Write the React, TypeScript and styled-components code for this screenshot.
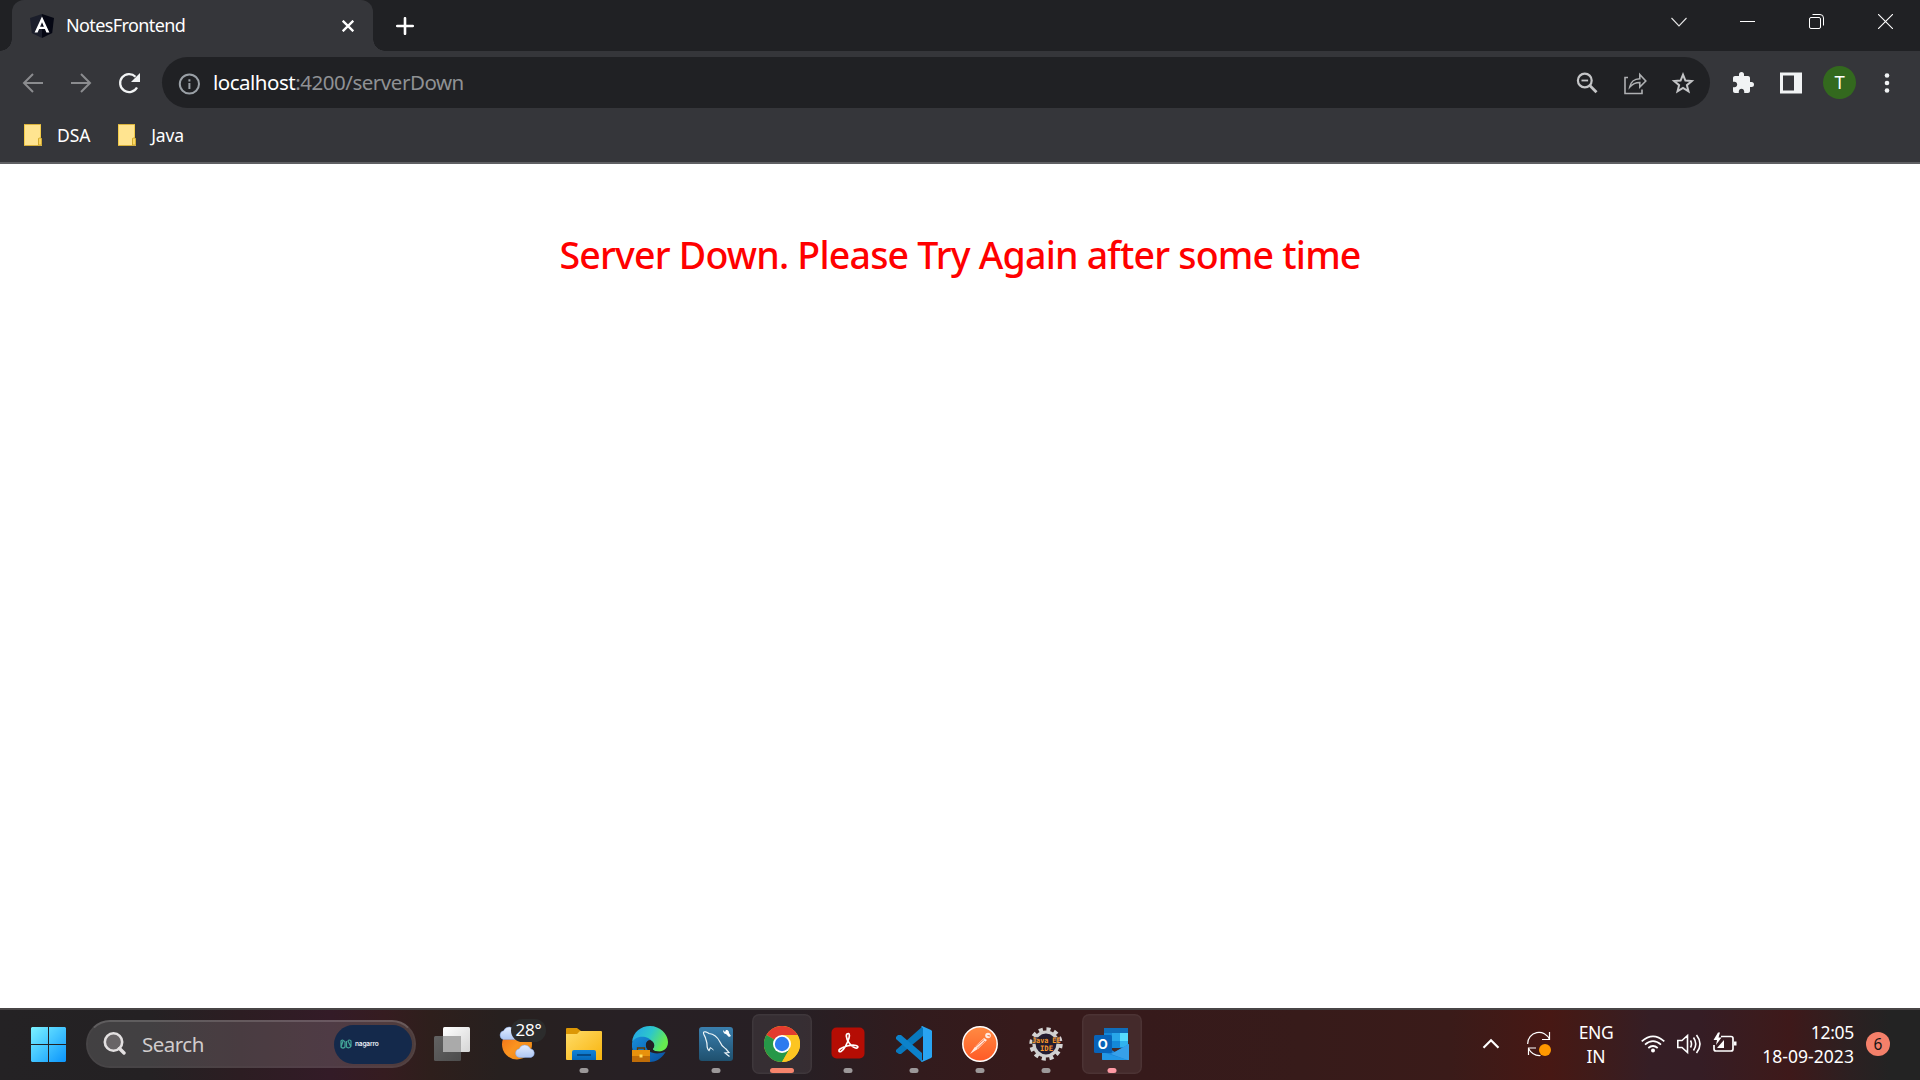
import React from 'react';
import styled, { createGlobalStyle } from 'styled-components';

const Global = createGlobalStyle`
  *{box-sizing:border-box}
  html,body{margin:0;padding:0;background:#fff;overflow:hidden}
  body{font-family:"Noto Sans","Open Sans",sans-serif;color:#fff}
  svg{display:block;flex:none}
`;

const Screen = styled.div`width:1920px;height:1080px;display:flex;flex-direction:column;overflow:hidden;`;
const TabStrip = styled.header`height:51px;flex:none;background:#202124;display:flex;`;
const TabShape = styled.div`
  width:361px;height:51px;margin-left:12px;padding:0 19px 0 18px;display:flex;align-items:center;
  background:#35363a;border-radius:12px 12px 0 0;position:relative;
  &::before,&::after{content:'';position:absolute;bottom:0;width:12px;height:12px;}
  &::before{left:-12px;background:radial-gradient(circle at 0 0,#202124 11.5px,#35363a 12px);}
  &::after{right:-12px;background:radial-gradient(circle at 100% 0,#202124 11.5px,#35363a 12px);}
`;
const Label = styled.span<{ $size: number; $ls?: number; $color?: string; $up?: boolean }>`
  font-size:${p => p.$size}px;letter-spacing:${p => p.$ls ?? 0}px;color:${p => p.$color ?? '#fff'};
  line-height:24px;white-space:pre;
  ${p => p.$up && 'transform:translateY(-1px);'}
`;
const TabTitle = styled(Label)`margin-left:12px;flex:1;`;
const NewTab = styled.div`margin-left:23px;display:flex;align-items:center;`;
const WindowButtons = styled.div`margin-left:auto;display:flex;height:43px;`;
const WindowButton = styled.div<{ $w?: number }>`width:${p => p.$w ?? 69}px;display:flex;align-items:center;justify-content:center;`;
const Toolbar = styled.div`height:63px;flex:none;background:#35363a;display:flex;padding:6px 0;align-items:center;`;
const NavButtons = styled.div`display:flex;gap:24px;padding-left:21px;width:162px;`;
const Omnibox = styled.div`
  width:1548px;height:51px;border-radius:26px;background:#202124;display:flex;align-items:center;padding:0 15px 0 15px;
`;
const Url = styled.div`margin-left:12px;flex:1;display:flex;`;
const OmniActions = styled.div`display:flex;gap:24px;align-items:center;`;
const Actions = styled.div`display:flex;align-items:center;padding-left:21px;`;
const Avatar = styled.div`
  width:33px;height:33px;border-radius:50%;background:#33691e;display:flex;align-items:center;justify-content:center;
  margin:0 19px 0 20px;font-family:Roboto,sans-serif;font-size:18px;
`;
const PanelGap = styled.div`margin-left:24px;`;
const Bookmarks = styled.div`height:48px;flex:none;background:#35363a;display:flex;padding:10px 0 0 24px;gap:28px;`;
const Bookmark = styled.div`display:flex;align-items:flex-start;gap:15px;height:24px;`;
const Page = styled.main`
  height:846px;flex:none;border-top:2px solid #5f6063;background:#fff;display:flex;justify-content:center;align-items:flex-start;padding-top:64px;
`;
const Heading = styled.h1`
  margin:0;font-size:37.5px;line-height:54px;font-weight:500;color:#f00;letter-spacing:-.79px;white-space:nowrap;
`;
const Taskbar = styled.footer`
  height:72px;flex:none;border-top:2px solid #484546;display:flex;align-items:stretch;
  background:linear-gradient(90deg,#242224 0,#242123 150px,#2c1d22 240px,#331b27 330px,#351c20 385px,#2e1f1c 430px,#27201f 500px,#272024 620px,#271f24 800px,#321b1d 920px,#361a1b 1020px,#361a1b 1140px,#371b1a 1300px,#3a1b19 1450px,#471814 1550px,#401b19 1590px,#351e25 1650px,#351d25 1700px,#3b1b1d 1760px,#3e191a 1790px,#2c2021 1850px,#232323 1890px,#232323 1920px);
`;
const Start = styled.div`padding:17px 20px 0 31px;`;
const SearchBox = styled.div`
  width:330px;height:48px;margin-top:10px;border-radius:24px;border:2px solid rgba(255,255,255,.16);border-top-color:rgba(255,255,255,.27);
  background:rgba(255,255,255,.14);background-clip:padding-box;display:flex;align-items:center;padding:0 2px 0 15px;
`;
const SearchLabel = styled(Label)`margin-left:16px;flex:1;`;
const Pill = styled.div`
  width:78px;height:39px;border-radius:20px;background:#14294b;display:flex;align-items:center;padding-left:6px;gap:3px;
  font-family:Inter,sans-serif;font-size:6.6px;font-weight:600;color:#e8ecf4;letter-spacing:-.2px;
`;
const Apps = styled.div`display:flex;gap:6px;margin-left:6px;`;
const AppSlot = styled.div<{ $active?: boolean }>`
  width:60px;height:60px;margin-top:4px;border-radius:7px;position:relative;display:flex;align-items:center;justify-content:center;
  ${p => p.$active && 'background:rgba(255,255,255,.07);box-shadow:inset 0 0 0 1.5px rgba(255,255,255,.045);'}
`;
const Indicator = styled.i<{ $w?: number; $color?: string }>`
  position:absolute;bottom:1px;left:50%;transform:translateX(-50%);width:${p => p.$w ?? 9}px;height:5px;border-radius:3px;background:${p => p.$color ?? '#9c9899'};
`;
const TempBadge = styled.div`
  position:absolute;left:23px;top:5px;width:35px;height:23px;border-radius:12px;background:#2c2c2c;display:flex;align-items:center;justify-content:center;
`;
const Tray = styled.div`margin-left:auto;display:flex;align-items:center;padding:0 30px 2px 0;`;
const TrayItem = styled.div<{ $ml: number }>`margin-left:${p => p.$ml}px;`;
const Stack = styled.div<{ $align: string; $w: number; $ml: number }>`
  width:${p => p.$w}px;margin-left:${p => p.$ml}px;display:flex;flex-direction:column;align-items:${p => p.$align};
`;
const Count = styled.div`
  width:24px;height:24px;border-radius:50%;background:#f4806a;margin-left:12px;display:flex;align-items:center;justify-content:center;
`;

const AngularIcon = () => (
  <svg width="24" height="24" viewBox="0 0 24 24">
    <path d="M12 0 0 4l1.8 15L12 24z" fill="#1b1e2b" /><path d="M12 0l12 4-1.8 15L12 24z" fill="#050713" />
    <path d="M12 2.600 4.600 18.600h3l1.500-3.600h5.800l1.500 3.600h3L12 2.600zm0 5.600 1.900 4.500h-3.800z" fill="#fff" />
  </svg>
);
const Arrow = ({ flip }: { flip?: boolean }) => (
  <svg width="24" height="24" viewBox="0 0 24 24" fill="none" stroke="#8b8c8f" strokeWidth="2">
    {flip ? <path d="M2 12h18M12 3l9 9-9 9" /> : <path d="M22 12H4M12 3l-9 9 9 9" />}
  </svg>
);
const FolderMark = () => (
  <svg width="18" height="22" viewBox="0 0 18 22">
    <path d="M0 0h17v14.5h1V22H0z" fill="#ffe490" />
    <path d="M.5.5h16v14h-2v7H.5z" fill="#ffe490" stroke="#f3cc49" />
    <path d="M14.5 15q0-1 1-1h1q1 0 1 1v6h-3z" fill="#fbd662" stroke="#c79f25" strokeWidth=".8" />
    <path d="M0 .3h17M0 21.6h18" stroke="#c5a033" strokeWidth=".7" />
  </svg>
);
const StarIcon = () => (
  <svg width="24" height="24" viewBox="0 0 24 24" fill="none" stroke="#c4c5c7" strokeWidth="2">
    <path d="M12 3.700l2.400 5.900 6.400.5-4.900 4.100 1.600 6.200L12 17l-5.500 3.400 1.600-6.200-4.900-4.100 6.400-.5z" />
  </svg>
);

const WindowsLogo = () => (
  <svg width="35" height="35" viewBox="0 0 35 35">
    <defs><linearGradient id="win" x1="0" y1="0" x2="35" y2="35" gradientUnits="userSpaceOnUse"><stop stopColor="#7cf2ff" /><stop offset=".5" stopColor="#42c4ff" /><stop offset="1" stopColor="#0a94fc" /></linearGradient></defs>
    <path d="M1 0h16v17H0V1zM18 0h16l1 1v16H18zM0 18h17v17H1l-1-1zM18 18h17v16l-1 1H18z" fill="url(#win)" />
  </svg>
);
const TaskView = () => (
  <svg width="36" height="34" viewBox="0 0 36 34">
    <defs><linearGradient id="tv" x1="0" y1="0" x2="1" y2="1"><stop stopColor="#fff" /><stop offset="1" stopColor="#d5d5d5" /></linearGradient>
      <linearGradient id="tv2" x1="0" y1="0" x2="1" y2="1"><stop stopColor="#626262" /><stop offset="1" stopColor="#4d4d4d" /></linearGradient></defs>
    <rect y="9" width="27" height="25" rx="1.5" fill="url(#tv2)" /><rect x="9" width="27" height="25" rx="1.5" fill="url(#tv)" />
    <path d="M9 9h18v16H10.500q-1.500 0-1.500-1.500z" fill="#aaa" />
  </svg>
);
const Cloud = ({ x, y }: { x: number; y: number }) => (
  <path transform={`translate(${x} ${y})`} d="M4.500 13A4.500 4.500 0 0 1 4.700 4.200 6 6 0 0 1 15.800 4.200 4.500 4.500 0 0 1 16.500 13z" fill="url(#cl)" stroke="#7fa0de" strokeWidth=".5" />
);
const Weather = () => (
  <svg width="38" height="36" viewBox="0 0 38 36">
    <defs><linearGradient id="sun" x1="0" y1="0" x2="1" y2="1"><stop stopColor="#ef6a16" /><stop offset=".5" stopColor="#fb9420" /><stop offset="1" stopColor="#e9860f" /></linearGradient>
      <linearGradient id="cl" x1="0" y1="0" x2="0" y2="1"><stop stopColor="#e3edff" /><stop offset="1" stopColor="#adc6f3" /></linearGradient></defs>
    <circle cx="18" cy="18.500" r="15" fill="url(#sun)" /><Cloud x={0} y={0.500} /><Cloud x={15.500} y={18.500} />
  </svg>
);
const Explorer = () => (
  <svg width="36" height="34" viewBox="0 0 36 34">
    <defs><linearGradient id="fx" x1="0" y1="0" x2="1" y2="1"><stop stopColor="#ffdc68" /><stop offset="1" stopColor="#f8b40d" /></linearGradient><linearGradient id="fb" x1="0" y1="0" x2="0" y2="1"><stop stopColor="#1283d8" /><stop offset="1" stopColor="#0668b8" /></linearGradient></defs>
    <path d="M0 2q0-1 1-1h10l4 3v5H0z" fill="#dc9705" /><path d="M0 7h11l3-3h21q1 0 1 1v28H1q-1 0-1-1z" fill="url(#fx)" />
    <path d="M6 33v-8q0-2 2-2h20q2 0 2 2v8z" fill="url(#fb)" /><path d="M11 28h14" stroke="#053f76" strokeWidth="1.600" />
  </svg>
);
const Edge = () => (
  <svg width="36" height="36" viewBox="0 0 36 36">
    <defs><linearGradient id="e1" x1="0" y1="0" x2="1" y2=".4"><stop stopColor="#22a0ed" /><stop offset=".55" stopColor="#2dc7cb" /><stop offset="1" stopColor="#66eb4f" /></linearGradient><linearGradient id="e2" x1="0" y1="0" x2="1" y2="1"><stop stopColor="#1790dc" /><stop offset="1" stopColor="#0a4fa0" /></linearGradient></defs>
    <path d="M0 17C2 9 11 7 17 11c3 2 4 3.500 4 5-3-4-8-1-7 4 1 6 8 9.500 19.500 6-4 7-10.500 10-15.500 10C6 36-1 28 0 17z" fill="url(#e2)" />
    <path d="M0 16C1 6 9 0 18 0c10 0 18 8 18 16 0 6-4 9.500-9 9.500-4 0-7-1.500-6-3 1.500-2 1-4.500-1-7C17 10 5 8 0 16z" fill="url(#e1)" />
    <path d="M14 19c0-4 4-6 7-3 2 3 1.500 5 0 6.500-1 2 3 3.500 7 3-5 2-14 0-14-6.500z" fill="#221f25" />
    <rect y="24" width="18" height="12" fill="#c06d08" /><path d="M0 24h18v6H0z" fill="#e8920d" /><path d="M5.500 24v-2h7v2" fill="none" stroke="#623800" strokeWidth="1.300" /><rect x="7.500" y="28.500" width="3" height="3" fill="#ffdc5b" />
  </svg>
);
const MySql = () => (
  <svg width="34" height="34" viewBox="0 0 34 34">
    <defs><linearGradient id="my" x1="0" y1="0" x2="0" y2="1"><stop stopColor="#3a7fae" /><stop offset="1" stopColor="#1f506e" /></linearGradient></defs>
    <rect width="34" height="34" rx="3" fill="url(#my)" />
    <path d="M11.500 20.500l-1.500 3c-2-1.500-2-4-2-6 0-2.500-1-4-1.500-6.500C6 9 4 7 4.500 5.500 5 4 8 5 10 6.500c5 .5 9 4.500 11 8.500 1.500 4 3.500 5 6 7l3 3.500-4 .5 4.500 3.500" fill="none" stroke="#edf5f8" strokeWidth="1.200" />
    <path d="M11.500 20.500l3 2.500" stroke="#edf5f8" />
    <path d="M24 3l2 2 1-2c3 0 3 2 3 3l2 3-2 1-3-3c-2 0-3-2-3-4z" fill="#fff" />
  </svg>
);
const Chrome = () => (
  <svg width="36" height="36" viewBox="0 0 36 36">
    <circle cx="18" cy="18" r="18" fill="#fcc521" /><path d="M18 18 2.400 9A18 18 0 0 1 33.600 9z" fill="#e33b2e" />
    <path d="M2.400 9A18 18 0 0 0 18 36l7.800-13.500L18 18z" fill="#269848" /><path d="M18 9h15.600A18 18 0 0 1 18 36l7.800-13.500z" fill="#fcc521" />
    <circle cx="18" cy="18" r="9" fill="#fff" /><circle cx="18" cy="18" r="7.200" fill="#2e7bef" />
  </svg>
);
const Acrobat = () => (
  <svg width="34" height="34" viewBox="0 0 34 34"><rect x=".5" y=".5" width="33" height="31" rx="5" fill="#b50d04" />
    <path d="M16 7c2-1.500 3 .5 2 4-1.500 5-5 12-8 13.500-2 1-3-1-1-2.500 4-3 12-4.500 16-3.500 3 1 2 3-.5 2.500C20 20 15.500 13 15.300 9c0-1 .2-1.600.7-2z" fill="none" stroke="#fff" strokeWidth="1.700" /></svg>
);
const VsCode = () => (
  <svg width="36" height="36" viewBox="0 0 36 36">
    <path d="M27 0 0 24v2l3 2h2L27 10z" fill="#0878bd" /><path d="M5 9 2 9 0 11v2l26 23V27z" fill="#0c82cb" /><path d="M26 0l9 4 1 1v26l-1 1-9 4-1-1 2-1V2l-2-1z" fill="#29a4f1" />
  </svg>
);
const Postman = () => (
  <svg width="36" height="36" viewBox="0 0 36 36">
    <defs><linearGradient id="pm" x1="0" y1="0" x2="0" y2="1"><stop stopColor="#ff8b43" /><stop offset="1" stopColor="#ff5a26" /></linearGradient></defs>
    <circle cx="18" cy="18" r="17.200" fill="url(#pm)" stroke="#fff" strokeWidth="1.500" />
    <path d="M8 28l5.500-8 8.500-8 3 2-8.500 8.500z" fill="#ffe9df" /><path d="M13 21l9-7.500M15 22.500l8-7.500" stroke="#ff6b32" strokeWidth=".8" /><circle cx="26" cy="9.500" r="2.800" fill="#ffe9df" /><path d="M25.500 9.500l2.500.500" stroke="#ff6b32" />
  </svg>
);
const JavaIde = () => (
  <svg width="36" height="36" viewBox="0 0 36 36">
    <circle cx="18" cy="18" r="14.800" fill="none" stroke="#d4d4d4" strokeWidth="3.800" strokeDasharray="4.100 3.650" /><circle cx="18" cy="18" r="12" fill="#221c31" stroke="#cfcfcf" strokeWidth="3.200" />
    <rect x="4" y="11" width="28" height="7" fill="#231c27" opacity=".7" />
    <text x="4" y="17" fontFamily="DejaVu Sans Mono" fontWeight="700" fontSize="7.500" fill="#f8982c" textLength="28.500" lengthAdjust="spacingAndGlyphs">Java EE</text>
    <text x="12" y="24.500" fontFamily="DejaVu Sans Mono" fontWeight="700" fontSize="7.500" fill="#f8982c" textLength="13" lengthAdjust="spacingAndGlyphs">IDE</text>
  </svg>
);
const Outlook = () => (
  <svg width="36" height="34" viewBox="0 0 36 34">
    <path d="M10 1h24v20H10z" fill="#1488d8" /><path d="M10 1h24v5H10z" fill="#0f6dba" /><path d="M18 6h8v8h-8z" fill="#27a6e9" /><path d="M26 6h8v8h-8z" fill="#55dcff" /><path d="M26 14h8v6h-8z" fill="#30b2ef" />
    <path d="M35 17v15q0 1-1 1H9q-1 0-1-1V17l13 8z" fill="#1b83d8" /><path d="M35 17 17 27l16 6h2z" fill="#36a0ea" /><path d="M8 25l26 8H9q-1 0-1-1z" fill="#2297e6" />
    <rect y="8" width="18" height="18" rx="1.500" fill="#0863b9" /><text x="3.700" y="21.500" fontFamily="Inter" fontWeight="700" fontSize="13" fill="#fff">O</text>
  </svg>
);

export default function App() {
  return (
    <Screen>
      <Global />
      <TabStrip>
        <TabShape>
          <AngularIcon />
          <TabTitle $up $size={18} $ls={-.6}>NotesFrontend</TabTitle>
          <svg width="12" height="12" viewBox="0 0 12 12" stroke="#fff" strokeWidth="2.300"><path d="M.7.7l10.600 10.600M11.300.7.7 11.300" /></svg>
        </TabShape>
        <NewTab><svg width="18" height="18" viewBox="0 0 18 18" stroke="#fff" strokeWidth="2.600" strokeLinecap="round"><path d="M9 1.200v15.600M1.200 9h15.600" /></svg></NewTab>
        <WindowButtons>
          <WindowButton $w={68}><svg width="16" height="10" viewBox="0 0 16 10" fill="none" stroke="#e5e5e5" strokeWidth="1.100"><path d="M.5 1 8 9l7.500-8" /></svg></WindowButton>
          <WindowButton><svg width="15" height="2" viewBox="0 0 15 2"><path d="M0 0h15v1H0z" fill="#fff" /></svg></WindowButton>
          <WindowButton><svg width="15" height="15" viewBox="0 0 15 15" fill="none" stroke="#fff"><rect x=".5" y="3.500" width="11" height="11" rx="1.500" /><path d="M3.500.5H11q3.500 0 3.500 3.500v7.500" /></svg></WindowButton>
          <WindowButton><svg width="15" height="15" viewBox="0 0 15 15" stroke="#fff" strokeWidth="1.100"><path d="M0 0l15 15M15 0 0 15" /></svg></WindowButton>
        </WindowButtons>
      </TabStrip>
      <Toolbar>
        <NavButtons>
          <Arrow /><Arrow flip />
          <svg width="24" height="24" viewBox="0 0 24 24"><path d="M20 16.500A9 9 0 1 1 18.500 5.700" fill="none" stroke="#f1f3f4" strokeWidth="2.300" /><path d="M23 2v9h-9z" fill="#f1f3f4" /></svg>
        </NavButtons>
        <Omnibox>
          <svg width="24" height="24" viewBox="0 0 24 24" fill="none" stroke="#9aa0a6" strokeWidth="2"><circle cx="12.400" cy="13" r="9.600" /><path d="M12.400 12v6M12.400 8.200v2.200" /></svg>
          <Url><Label $up $size={20.500} $ls={-.5}>localhost</Label><Label $up $size={20.500} $ls={-.46} $color="#8f9194">:4200/serverDown</Label></Url>
          <OmniActions>
            <svg width="24" height="24" viewBox="0 0 24 24" fill="none" stroke="#c4c5c7" strokeWidth="2.200"><circle cx="9.800" cy="9.500" r="6.900" /><path d="M6.500 9.500h6.600" strokeWidth="1.800" /><path d="M14.800 14.500l6.700 6.700" strokeWidth="2.800" /></svg>
            <svg width="24" height="24" viewBox="0 0 24 24" fill="none" stroke="#aeb0b2" strokeWidth="1.600"><path d="M5 6.500H2v16h17v-4" /><path d="M6.800 16C8 10 11 8 16.800 7.700V3.500l6 6.500-6 6v-4.500c-4.500 0-7 1-10 4.500z" /></svg>
            <StarIcon />
          </OmniActions>
        </Omnibox>
        <Actions>
          <svg width="24" height="24" viewBox="0 0 24 24" fill="#f1f3f4"><path d="M20.500 11H19V7c0-1.100-.9-2-2-2h-4V3.500a2.500 2.500 0 0 0-5 0V5H4c-1.100 0-2 .9-2 2v3.800h1.500c1.500 0 2.700 1.200 2.700 2.700S5 16.200 3.500 16.200H2V20c0 1.100.9 2 2 2h3.800v-1.500c0-1.500 1.200-2.700 2.700-2.700s2.700 1.200 2.700 2.700V22H17c1.100 0 2-.9 2-2v-4h1.500a2.500 2.500 0 0 0 0-5z" /></svg>
          <PanelGap><svg width="24" height="24" viewBox="0 0 24 24"><path fillRule="evenodd" d="M1 1.500h22v21H1zM4 4.500v15h11v-15z" fill="#f1f3f4" /></svg></PanelGap>
          <Avatar>T</Avatar>
          <svg width="24" height="24" viewBox="0 0 24 24" fill="#f1f3f4"><circle cx="12" cy="4.500" r="2.300" /><circle cx="12" cy="12" r="2.300" /><circle cx="12" cy="19.500" r="2.300" /></svg>
        </Actions>
      </Toolbar>
      <Bookmarks>
        <Bookmark><FolderMark /><Label $up $size={17.500} $ls={-.1}>DSA</Label></Bookmark>
        <Bookmark><FolderMark /><Label $up $size={17.500} $ls={-.2}>Java</Label></Bookmark>
      </Bookmarks>
      <Page><Heading>Server Down. Please Try Again after some time</Heading></Page>
      <Taskbar>
        <Start><WindowsLogo /></Start>
        <SearchBox>
          <svg width="23" height="24" viewBox="0 0 23 24" fill="none" stroke="#e3e0e1"><circle cx="10.500" cy="10" r="8.700" strokeWidth="2.600" fill="#686466" /><path d="M16.500 16.500l4.500 4.500" strokeWidth="3.400" strokeLinecap="round" /></svg>
          <SearchLabel $size={20.500} $ls={-.5} $color="#d0cccd">Search</SearchLabel>
          <Pill><svg width="12" height="10" viewBox="0 0 12 10" fill="none" stroke="#43a497" strokeWidth="1.200"><path d="M1 8V2q2-2 4 1v5q-2 2-4 0l2-6M6.500 2v6q3 2 4.500-1V2q-2-2-3 0l3 6" /></svg>nagarro</Pill>
        </SearchBox>
        <Apps>
          <AppSlot><TaskView /></AppSlot>
          <AppSlot><Weather /><TempBadge><Label $up $size={17} $ls={-.3}>28°</Label></TempBadge></AppSlot>
          <AppSlot><Explorer /><Indicator /></AppSlot>
          <AppSlot><Edge /></AppSlot>
          <AppSlot><MySql /><Indicator /></AppSlot>
          <AppSlot $active><Chrome /><Indicator $w={24} $color="#f6846c" /></AppSlot>
          <AppSlot><Acrobat /><Indicator /></AppSlot>
          <AppSlot><VsCode /><Indicator /></AppSlot>
          <AppSlot><Postman /><Indicator /></AppSlot>
          <AppSlot><JavaIde /><Indicator /></AppSlot>
          <AppSlot $active><Outlook /><Indicator $color="#ff99a4" /></AppSlot>
        </Apps>
        <Tray>
          <svg width="18" height="12" viewBox="0 0 18 12" fill="none" stroke="#fff" strokeWidth="2.200"><path d="M1.500 9.800 9 2.300l7.500 7.500" /></svg>
          <TrayItem $ml={27}><svg width="24" height="26" viewBox="0 0 24 26" fill="none" stroke="#fff" strokeWidth="1.200"><path d="M.7 13A11.300 11.300 0 0 1 22.500 8.500M22.500 1v7.500H15M1.500 24v-7H9M1.500 17.500q4 7.500 12 7" /><circle cx="18" cy="19" r="6" fill="#ff9800" stroke="none" /></svg></TrayItem>
          <Stack $w={40} $ml={25} $align="center"><Label $size={17.500} $ls={-.4}>ENG</Label><Label $size={17.500}>IN</Label></Stack>
          <TrayItem $ml={25}><svg width="24" height="24" viewBox="0 0 24 24" fill="none" stroke="#fff" strokeWidth="1.700"><path d="M.7 9.300q11.300-10 22.600 0M4 12.700q8-7 16 0M7.300 16q4.700-4 9.400 0" /><circle cx="12" cy="18.500" r="2" fill="#fff" stroke="none" /></svg></TrayItem>
          <TrayItem $ml={12}><svg width="24" height="24" viewBox="0 0 24 24" fill="none" stroke="#fff" strokeWidth="1.600"><path d="M.8 8.500H5l5.500-5v17L5 15.500H.8zM13.500 8.500q2 3.500 0 7M16.500 5.500q4.500 6.500 0 13M19.500 3q7 9 0 18" /></svg></TrayItem>
          <TrayItem $ml={12}><svg width="24" height="24" viewBox="0 0 24 24" fill="none" stroke="#fff" strokeWidth="1.700"><path d="M8 4.500h10q2 0 2 2v10.500q0 2-2 2H3q-2 0-2-2V13" /><path d="M21 9.500h2.500v4H21zM11 8v8H4z" fill="#fff" stroke="none" /><path d="M5 .5 .5 8H4l-1 5 5.500-7.500H5.500L7 .5z" fill="#fff" stroke="none" /></svg></TrayItem>
          <Stack $w={97} $ml={20} $align="flex-end"><Label $size={17.500} $ls={-.3}>12:05</Label><Label $size={17.500} $ls={.05}>18-09-2023</Label></Stack>
          <Count><Label $size={15.500} $color="#151515">6</Label></Count>
        </Tray>
      </Taskbar>
    </Screen>
  );
}
